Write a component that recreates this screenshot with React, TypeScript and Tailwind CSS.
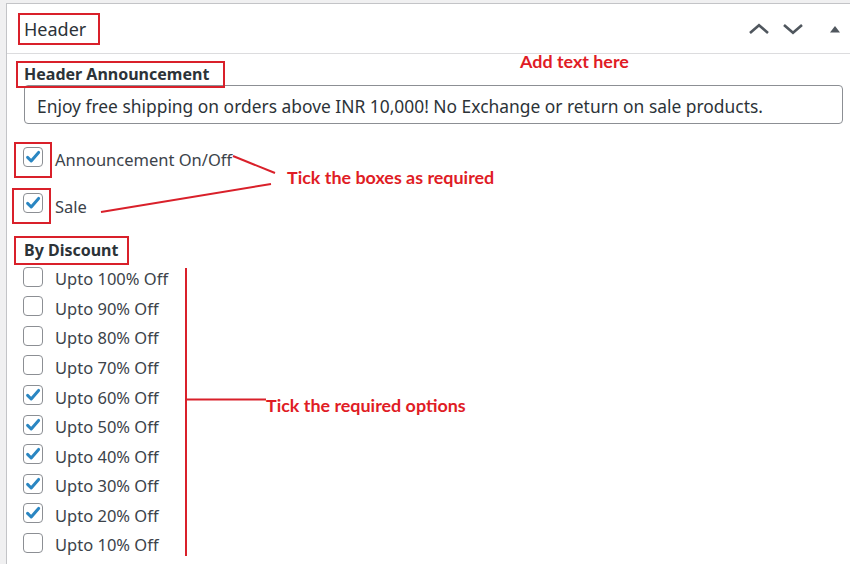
import React from 'react';

const discounts = [
  { label: 'Upto 100% Off', checked: false },
  { label: 'Upto 90% Off', checked: false },
  { label: 'Upto 80% Off', checked: false },
  { label: 'Upto 70% Off', checked: false },
  { label: 'Upto 60% Off', checked: true },
  { label: 'Upto 50% Off', checked: true },
  { label: 'Upto 40% Off', checked: true },
  { label: 'Upto 30% Off', checked: true },
  { label: 'Upto 20% Off', checked: true },
  { label: 'Upto 10% Off', checked: false },
];

function Box({ checked }: { checked: boolean }) {
  return (
    <span className="flex h-[20px] w-[20px] shrink-0 items-center justify-center rounded-[4px] border border-[#8c8f94] bg-white">
      {checked && (
        <svg width="16" height="16" viewBox="0 0 16 16">
          <path d="M2.6 8.4 L6.2 12 L13.6 3.4" fill="none" stroke="#2a86c2" strokeWidth="3" strokeLinecap="round" strokeLinejoin="round" />
        </svg>
      )}
    </span>
  );
}

function Note({ className, children }: { className: string; children: React.ReactNode }) {
  return (
    <div className={`absolute font-['Lato',sans-serif] text-[17.9px] font-bold leading-none text-[#e01c25] ${className}`}>
      {children}
    </div>
  );
}

export default function App() {
  return (
    <div className="relative h-[564px] w-[850px] overflow-hidden bg-[#f0f0f1] pl-[6px] pt-[3px] font-['Noto_Sans',sans-serif] text-[#2c3338]">
      <div className="h-[561px] border-l border-t border-[#c3c4c7] bg-white">
        <div className="flex h-[50px] items-center justify-between border-b border-[#dcdcde] pl-[17px] pr-[9px]">
          <span className="text-[18px] leading-none">Header</span>
          <div className="flex items-center gap-[14px]">
            <svg width="20" height="12" viewBox="0 0 20 12">
              <path d="M1 10 L10 2.2 L19 10" fill="none" stroke="#50575e" strokeWidth="2.6" />
            </svg>
            <svg width="20" height="12" viewBox="0 0 20 12">
              <path d="M1 2 L10 9.8 L19 2" fill="none" stroke="#50575e" strokeWidth="2.6" />
            </svg>
            <svg width="12" height="10" viewBox="0 0 12 10" className="ml-[12px]">
              <path d="M1 8.5 L6 2 L11 8.5 Z" fill="#50575e" />
            </svg>
          </div>
        </div>

        <div className="pl-[17px] pt-[8px]">
          <div className="text-[16px] font-bold leading-[24px]">Header Announcement</div>
          <div className="mt-[-1px] flex h-[39px] w-[819px] items-center rounded-[4px] border border-[#8c8f94] pl-[12px] pt-[3px] text-[17.4px]">
            Enjoy free shipping on orders above INR 10,000! No Exchange or return on sale products.
          </div>

          <label className="mt-[21px] flex h-[30px] items-center text-[16.5px] text-[#3c434a]">
            <span className="-ml-[1px] -translate-y-[3px]">
              <Box checked />
            </span>
            <span className="ml-[12px]">Announcement On/Off</span>
          </label>
          <label className="mt-[17px] flex h-[30px] items-center text-[16.5px] text-[#3c434a]">
            <span className="-ml-[1px] -translate-y-[4px]">
              <Box checked />
            </span>
            <span className="ml-[12px]">Sale</span>
          </label>

          <div className="mt-[16px] text-[16px] font-bold leading-[24px]">By Discount</div>
          <div className="mt-[3px] flex flex-col">
            {discounts.map((d) => (
              <label key={d.label} className="flex h-[29.56px] items-center text-[16.5px] text-[#3c434a]">
                <span className="-ml-[1px] -translate-y-[3px]">
                  <Box checked={d.checked} />
                </span>
                <span className="ml-[12px]">{d.label}</span>
              </label>
            ))}
          </div>
        </div>
      </div>

      {/* annotation layer */}
      <div className="pointer-events-none absolute left-[18px] top-[13px] h-[32px] w-[82px] border-2 border-[#d9202a]" />
      <div className="pointer-events-none absolute left-[16px] top-[61px] h-[27px] w-[209px] border-2 border-[#d9202a]" />
      <div className="pointer-events-none absolute left-[14px] top-[142px] h-[36px] w-[38px] border-2 border-[#d9202a]" />
      <div className="pointer-events-none absolute left-[12px] top-[188px] h-[36px] w-[39px] border-2 border-[#d9202a]" />
      <div className="pointer-events-none absolute left-[14px] top-[236px] h-[29px] w-[115px] border-2 border-[#d9202a]" />

      <svg className="pointer-events-none absolute left-0 top-0" width="850" height="564">
        <g stroke="#d9202a" strokeWidth="2" fill="none">
          <line x1="233" y1="156" x2="275" y2="173" />
          <line x1="271" y1="184" x2="101" y2="212" />
          <line x1="186" y1="268" x2="186" y2="556" />
          <line x1="186" y1="399.5" x2="266" y2="399.5" />
        </g>
      </svg>

      <Note className="left-[520px] top-[53px]">Add text here</Note>
      <Note className="left-[287px] top-[169px]">Tick the boxes as required</Note>
      <Note className="left-[266px] top-[397px]">Tick the required options</Note>
    </div>
  );
}
